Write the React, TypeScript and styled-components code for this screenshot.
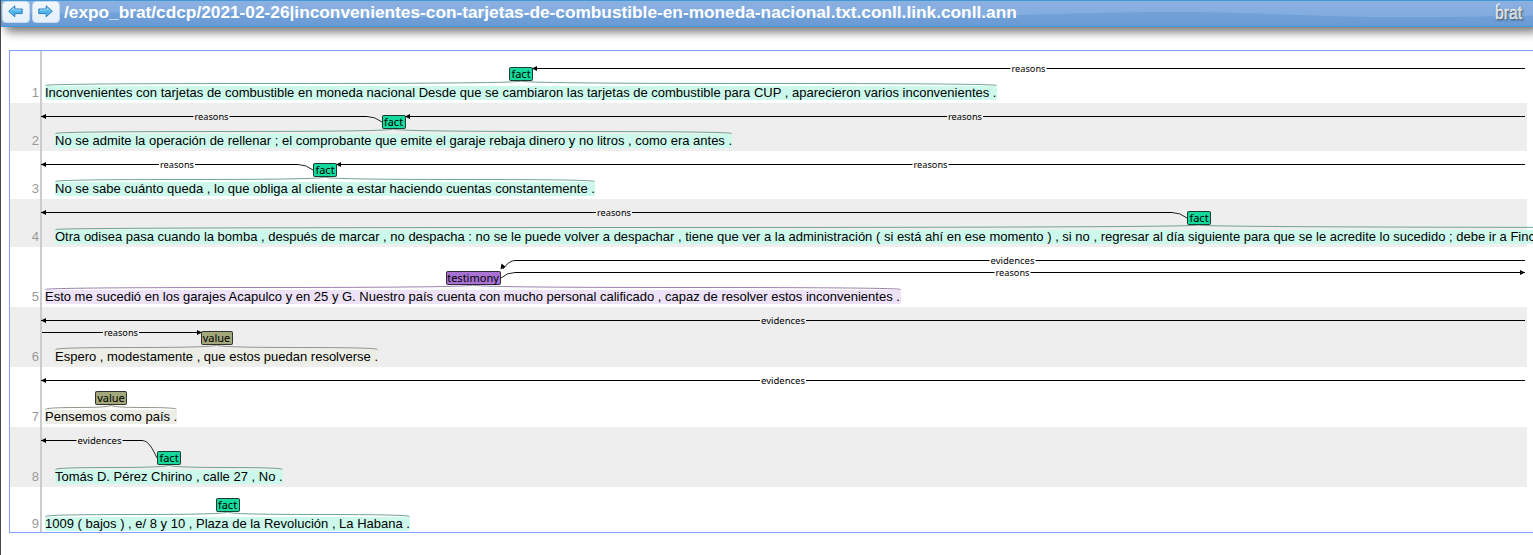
import React from 'react';
import styled, { createGlobalStyle } from 'styled-components';

const Global = createGlobalStyle`
  html, body { margin: 0; height: 100%; background: #fff; overflow: hidden; }
  body { font-family: "Liberation Sans", Arial, sans-serif; }
`;

const Page = styled.div`
  box-sizing: border-box;
  width: 100%;
  height: 555px;
  overflow: hidden;
  border-left: 1px solid #4a4640;
`;

const Header = styled.header`
  position: relative;
  box-sizing: border-box;
  display: flex;
  align-items: flex-start;
  height: 27px;
  padding: 0 9px 0 1px;
  border: solid #4297d7;
  border-width: 1px 0;
  background: linear-gradient(#7aa8dc, #6a9ad5);
  box-shadow: 5px 5px 10px #777;
`;

const Gloss = styled.svg`
  position: absolute;
  inset: 0;
  width: 100%;
  height: 25px;
`;

const NavButton = styled.button`
  position: relative;
  display: flex;
  align-items: center;
  justify-content: center;
  box-sizing: border-box;
  width: 28px;
  height: 22px;
  margin-right: 2px;
  padding: 0 1px 1px 0;
  border: 1px solid #c5dbec;
  border-radius: 4px;
  background: linear-gradient(#f1f7fd, #e4effb);
`;

const DocTitle = styled.h1`
  position: relative;
  flex: 1;
  margin: 1px 0 0 2px;
  color: #fff;
  font-size: 17.27px;
  line-height: 20px;
  font-weight: bold;
  white-space: nowrap;
`;

const Logo = styled.svg`
  position: relative;
  flex: none;
  width: 30px;
  height: 24px;
  overflow: visible;
  fill: #fff;
  font: 19px "Liberation Sans Narrow", "Liberation Sans", sans-serif;
  text-shadow: 1px 1px 2px #345;
`;

const Canvas = styled.main`
  box-sizing: border-box;
  height: 483px;
  margin: 23px 0 0 8px;
  border: 1px solid #7fa2ff;
  border-right: 0;
  overflow: hidden;
`;

const Row = styled.section<{ $height: number; $shaded: boolean }>`
  position: relative;
  display: flex;
  align-items: stretch;
  height: ${(p) => p.$height}px;
  &::before {
    content: '';
    position: absolute;
    inset: 0 6px 0 0;
    background: ${(p) => (p.$shaded ? '#eee' : '#fff')};
  }
`;

const Gutter = styled.div`
  position: relative;
  box-sizing: border-box;
  display: flex;
  align-items: flex-end;
  justify-content: flex-end;
  flex: 0 0 32px;
  padding: 0 1px 3px 0;
  border-right: 2px solid #ccc;
  color: #999;
  font-size: 13px;
  line-height: 15px;
`;

const Body = styled.div<{ $indent: number }>`
  position: relative;
  display: flex;
  align-items: flex-end;
  padding: 0 0 3px ${(p) => p.$indent}px;
`;

const Span = styled.div<{ $width: number }>`
  display: flex;
  flex: none;
  flex-direction: column;
  align-items: center;
  width: ${(p) => p.$width}px;
`;

const Chip = styled.div<{ $fill: string; $width: number }>`
  position: relative;
  z-index: 1;
  box-sizing: border-box;
  display: flex;
  justify-content: center;
  width: ${(p) => p.$width}px;
  height: 14px;
  border: 1px solid rgba(30, 30, 30, 0.85);
  border-radius: 2px;
  background: ${(p) => p.$fill};
  color: #000;
  font: 11px/11px "Noto Sans", sans-serif;
  white-space: nowrap;
`;

const Bracket = styled.svg`
  display: block;
  height: 5px;
  overflow: visible;
`;

const Words = styled.div<{ $tint: string }>`
  width: 100%;
  height: 14px;
  border-radius: 2px;
  background: ${(p) => p.$tint};
  color: #000;
  font-size: 13px;
  line-height: 13px;
  white-space: pre;
`;

const ArcLayer = styled.svg`
  position: absolute;
  left: 0;
  top: 0;
  width: 1524px;
  height: 100%;
  overflow: visible;
  font: 9px "Noto Sans", sans-serif;
`;

type Kind = 'fact' | 'testimony' | 'value';
interface Arc { y: number; from: number; to: number; label: string; mid: number; half: number; head: 'left' | 'right' | 'none'; tail?: string; headTail?: boolean }
interface Sentence { text: string; kind: Kind; height: number; indent: number; width: number; arcs: Arc[] }

const kinds: Record<Kind, { fill: string; tint: string; stroke: string; width: number }> = {
  fact: { fill: '#14db9d', tint: '#ccf9ec', stroke: '#70a394', width: 24 },
  testimony: { fill: '#a873d5', tint: '#ede2f7', stroke: '#9b84ae', width: 55 },
  value: { fill: '#a2a87c', tint: '#ecede5', stroke: '#94968a', width: 32 },
};

/* Arc coordinates are relative to the left edge of the row and its top. */
const sentences: Sentence[] = [
  { text: 'Inconvenientes con tarjetas de combustible en moneda nacional Desde que se cambiaron las tarjetas de combustible para CUP , aparecieron varios inconvenientes .', kind: 'fact', height: 52, indent: 3, width: 952, arcs: [
    { y: 17.5, from: 522, to: 1515, label: 'reasons', mid: 1018.5, half: 19, head: 'left' }] },
  { text: 'No se admite la operación de rellenar ; el comprobante que emite el garaje rebaja dinero y no litros , como era antes .', kind: 'fact', height: 48, indent: 13, width: 677, arcs: [
    { y: 13.5, from: 31, to: 357, label: 'reasons', mid: 201.5, half: 19, head: 'left', tail: 'M357 13.5Q365 13.5 372 19' },
    { y: 13.5, from: 395, to: 1515, label: 'reasons', mid: 955, half: 19, head: 'left' }] },
  { text: 'No se sabe cuánto queda , lo que obliga al cliente a estar haciendo cuentas constantemente .', kind: 'fact', height: 48, indent: 13, width: 540, arcs: [
    { y: 13.5, from: 31, to: 288, label: 'reasons', mid: 167, half: 19, head: 'left', tail: 'M288 13.5Q296 13.5 303 19' },
    { y: 13.5, from: 326, to: 1515, label: 'reasons', mid: 920.5, half: 19, head: 'left' }] },
  { text: 'Otra odisea pasa cuando la bomba , después de marcar , no despacha : no se le puede volver a despachar , tiene que ver a la administración ( si está ahí en ese momento ) , si no , regresar al día siguiente para que se le acredite lo sucedido ; debe ir a Finc', kind: 'fact', height: 48, indent: 13, width: 2288, arcs: [
    { y: 13.5, from: 31, to: 1162, label: 'reasons', mid: 604, half: 19, head: 'left', tail: 'M1162 13.5Q1170 13.5 1177 19' }] },
  { text: 'Esto me sucedió en los garajes Acapulco y en 25 y G. Nuestro país cuenta con mucho personal calificado , capaz de resolver estos inconvenientes .', kind: 'testimony', height: 60, indent: 3, width: 856, arcs: [
    { y: 13.5, from: 505, to: 1515, label: 'evidences', mid: 1002.5, half: 24, head: 'none', tail: 'M505 13.5Q499 13.5 493 22', headTail: true },
    { y: 25.5, from: 505, to: 1515, label: 'reasons', mid: 1002.5, half: 19, head: 'right', tail: 'M505 25.5Q497 25.5 491 31' }] },
  { text: 'Espero , modestamente , que estos puedan resolverse .', kind: 'value', height: 60, indent: 13, width: 323, arcs: [
    { y: 13.5, from: 31, to: 1515, label: 'evidences', mid: 773, half: 24, head: 'left' },
    { y: 25.5, from: 32, to: 192, label: 'reasons', mid: 111, half: 19, head: 'right' }] },
  { text: 'Pensemos como país .', kind: 'value', height: 60, indent: 3, width: 132, arcs: [
    { y: 13.5, from: 31, to: 1515, label: 'evidences', mid: 773, half: 24, head: 'left' }] },
  { text: 'Tomás D. Pérez Chirino , calle 27 , No .', kind: 'fact', height: 60, indent: 13, width: 228, arcs: [
    { y: 13.5, from: 31, to: 132, label: 'evidences', mid: 89.5, half: 24, head: 'left', tail: 'M132 13.5C139 13.5 143 23 147 31' }] },
  { text: '1009 ( bajos ) , e/ 8 y 10 , Plaza de la Revolución , La Habana .', kind: 'fact', height: 47, indent: 3, width: 365, arcs: [] },
];

function ArcMark({ arc }: { arc: Arc }) {
  const { y, from, to, mid, half } = arc;
  return (
    <g>
      <path d={`M${from} ${y}H${mid - half + 1}M${mid + half - 1} ${y}H${to}`} stroke="#000" fill="none" />
      {arc.tail && <path d={arc.tail} stroke="#222" fill="none" />}
      {arc.head === 'left' && <path d={`M${from} ${y}l5-2.5v5z`} />}
      {arc.head === 'right' && <path d={`M${to} ${y}l-5-2.5v5z`} />}
      {arc.headTail && <path d="M490.5 22.5l1-6 4 3.2z" />}
      <text x={mid} y={y + 3} textAnchor="middle" textLength={half * 2 - 4} lengthAdjust="spacingAndGlyphs">{arc.label}</text>
    </g>
  );
}

function Brace({ width, stroke }: { width: number; stroke: string }) {
  const m = width / 2;
  const q = width / 4;
  return (
    <Bracket width={width} height={5}>
      <path d={`M0.5 4.5Q0.5 2.5 ${q} 2.5T${m} 0Q${m} 2.5 ${m + q} 2.5T${width - 0.5} 4.5`} fill="none" stroke={stroke} />
    </Bracket>
  );
}

function ArrowIcon({ flip = false }: { flip?: boolean }) {
  return (
    <svg width="15" height="13" viewBox="0 0 15 13" transform={flip ? 'scale(-1 1)' : undefined}>
      <path d="M0.7 6.3L6.8 0.8V4H14.2V8.6H6.8V11.8Z" fill="#4fb4ea" stroke="#2e7dbd" strokeLinejoin="round" />
      <path d="M2.5 6.1L5.8 3V5H13.2" fill="none" stroke="#a5e0fa" strokeWidth=".9" />
    </svg>
  );
}

export default function App() {
  return (
    <>
      <Global />
      <Page>
        <Header>
          <Gloss preserveAspectRatio="none" viewBox="0 0 1532 25">
            <defs>
              <linearGradient id="gloss" x1="0" y1="0" x2="0" y2="1">
                <stop offset="0" stopColor="#8ab0e0" />
                <stop offset="1" stopColor="#82acdf" />
              </linearGradient>
            </defs>
            <path d="M0 0H1532V14.5Q1470 16 1400 16C1310 16 1260 11 1170 11S1000 16 900 16S760 11 670 11S500 16 400 16S260 11 170 11S60 13 0 14Z" fill="url(#gloss)" />
          </Gloss>
          <NavButton aria-label="Previous"><ArrowIcon /></NavButton>
          <NavButton aria-label="Next"><ArrowIcon flip /></NavButton>
          <DocTitle>/expo_brat/cdcp/2021-02-26|inconvenientes-con-tarjetas-de-combustible-en-moneda-nacional.txt.conll.link.conll.ann</DocTitle>
          <Logo>
            <text x="1" y="18" textLength="27" lengthAdjust="spacingAndGlyphs" stroke="#fff" strokeWidth=".4">brat</text>
            <path d="M2 4.5L6 2.5" fill="none" stroke="#fff" />
          </Logo>
        </Header>
        <Canvas>
          {sentences.map((s, i) => {
            const k = kinds[s.kind];
            return (
              <Row key={i} $height={s.height} $shaded={i % 2 === 1}>
                <Gutter>{i + 1}</Gutter>
                <Body $indent={s.indent}>
                  <Span $width={s.width}>
                    <Chip $fill={k.fill} $width={k.width}>{s.kind}</Chip>
                    <Brace width={s.width} stroke={k.stroke} />
                    <Words $tint={k.tint}>{s.text}</Words>
                  </Span>
                </Body>
                <ArcLayer>{s.arcs.map((a, j) => <ArcMark key={j} arc={a} />)}</ArcLayer>
              </Row>
            );
          })}
        </Canvas>
      </Page>
    </>
  );
}
